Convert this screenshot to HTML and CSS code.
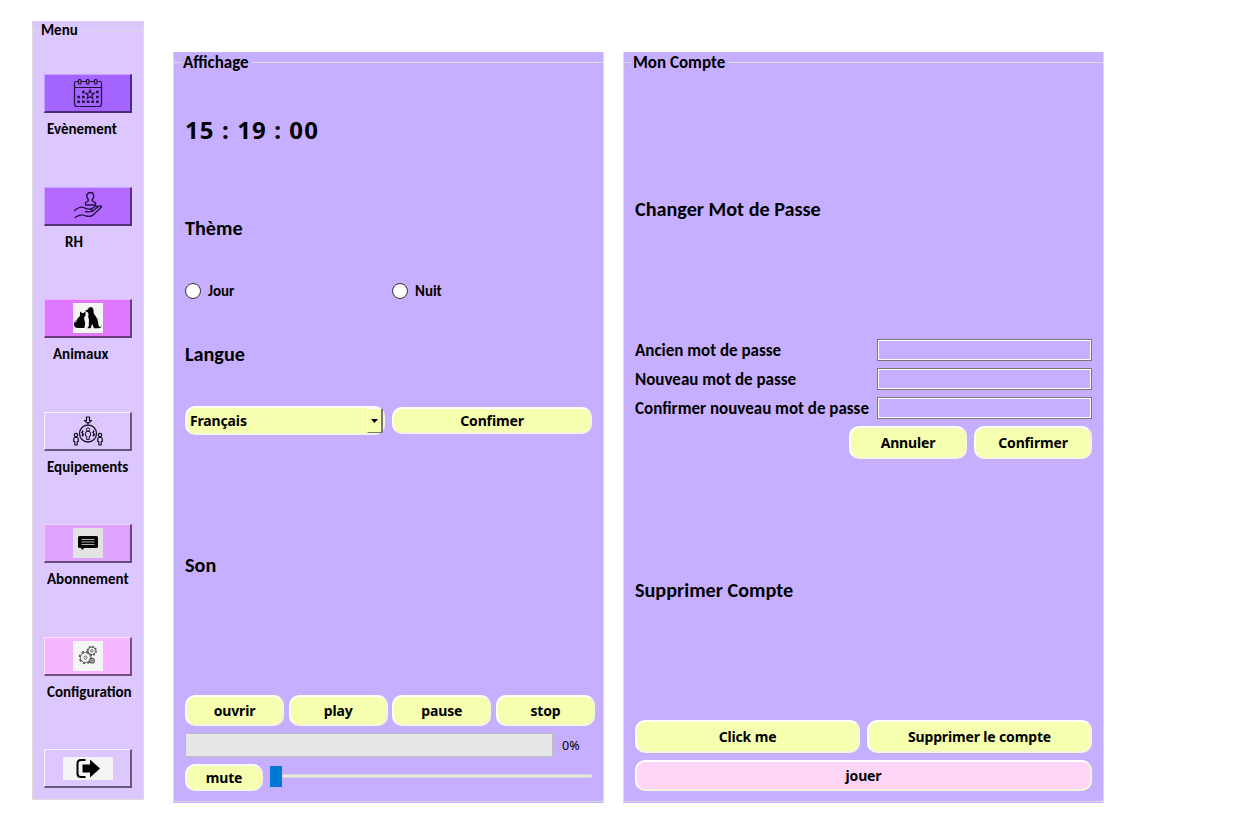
FILE: index.html
```
<!DOCTYPE html>
<html lang="fr">
<head>
<meta charset="utf-8">
<title>Configuration</title>
<link rel="stylesheet" href="styles.css">
</head>
<body>
<main class="window">
  <nav class="group menu">
    <div class="group-title"><span>Menu</span></div>
    <div class="items">
      <div class="item">
        <button class="tool events"><svg width="30" height="30" viewBox="0 0 30 30" fill="none" stroke="#201038" stroke-width="1.200"><path d="M5 3.500H3Q1.500 3.500 1.500 5V26Q1.500 28.500 4 28.500H26Q28.500 28.500 28.500 26V5Q28.500 3.500 27 3.500H25M8 3.500H13M17 3.500H22M2 9.500H28"/><rect x="5.500" y="1.500" width="2.500" height="4.500" rx="1"/><rect x="13.500" y="1.500" width="2.500" height="4.500" rx="1"/><rect x="21.500" y="1.500" width="2.500" height="4.500" rx="1"/><path d="m17 12 1.200 3 3 .2-2.300 2 .8 3.200-2.700-1.700-2.700 1.700.8-3.200-2.300-2 3-.2z"/><path stroke-width="2.600" stroke-dasharray="2.600 2.100" d="M9 14h2.600M23.100 14h2.600M4.300 19h7.300M23.100 19h2.600M4.300 23.700h22"/></svg></button>
        <span class="caption">Evènement</span>
      </div>
      <div class="item">
        <button class="tool staff"><svg width="30" height="30" viewBox="0 0 30 30" fill="none" stroke="#201038" stroke-width="1.300" stroke-linejoin="round" stroke-linecap="round"><path d="M12.500 14v-2.500q3-1 3-2.500Q13 6 14 3.500Q15 1.500 17.500 1.500T20.500 3.500Q21.500 6 19 9q0 1.500 3.500 2.500V14z"/><path d="M1.500 19.500Q7 15 10.500 16.500q3 2 7 1.500 2.500.5 1 2.200-2 1-6 .3M19 20.500l7-5.500q2.500-.7 2.500 1L20 24q-2 2-7 1l-3-1q-3-1-8 2.500M18 18l5-3q1.500 0 1 1.500"/></svg></button>
        <span class="caption shift-rh">RH</span>
      </div>
      <div class="item">
        <button class="tool animals"><svg class="plate" width="30" height="30" viewBox="0 0 30 30" fill="#050505"><path d="M7 13 7 8.500l2 1.500h1.500L12.500 8.500v4q-1.200 1.500-1.500 2.500Q13 20 11.500 25H5.500Q1 25 1 21.500q0-2.500 1.500-4.500-.5 2 .5 3Q3.500 15.500 7 13z"/><path d="M14.500 9q-2.300 0-2-1.500l2.300-1Q15.500 4 17.500 4q3 0 3 3.500-.3 2 1 4 3.500 4 3.700 8.500.3 3.500 1.300 3.700 1.200.3 2-1.200 0 2.500-3 2.800h-4.500l-2-4.500-1.200 4.500h-3.600l1.600-2 .2-6.500q-1.300-3-.5-6z"/></svg></button>
        <span class="caption shift-animals">Animaux</span>
      </div>
      <div class="item">
        <button class="tool gear"><svg width="30" height="30" viewBox="0 0 30 30" fill="none" stroke="#17131f" stroke-linejoin="round"><path stroke="#cfb9ee" stroke-width=".7" d="M0 10 10 0M0 17 7 10M20 9 29 0M23 14 30 7M2 29l7-7M20 29l7-7"/><circle cx="15" cy="17.500" r="8.500" stroke-width="1.300"/><path stroke-width="1.200" d="M13.500 1h3v3.500h2L15 7.500 11.500 4.500h2z"/><circle cx="15" cy="13.500" r="1.700"/><path d="M13.700 23.500v-3.500h-1.200v-3q0-1.500 1.500-1.500h2q1.500 0 1.500 1.500v3h-1.200v3.500z"/><g stroke-width="1.200"><circle cx="3" cy="19" r="1.700"/><path d="M1.800 29v-3.500H.7V23q0-1.500 1.500-1.500h1.600q1.500 0 1.500 1.500v2.500H4.200V29z"/><circle cx="27" cy="19" r="1.700"/><path d="M25.800 29v-3.500h-1.100V23q0-1.500 1.500-1.500h1.600q1.500 0 1.500 1.500v2.500h-1.100V29z"/></g><path d="M10.500 15.500q-2-.5-2 .7t1.200 1.200 1 1.500-2.200.7M9.500 14.300v6M21.500 15.500q-2-.5-2 .7t1.200 1.200 1 1.500-2.200.7M20.500 14.300v6"/></svg></button>
        <span class="caption">Equipements</span>
      </div>
      <div class="item">
        <button class="tool subs"><svg class="plate dim" width="30" height="30" viewBox="0 0 30 30"><path fill="#030303" d="M6.500 8h17Q25 8 25 9.500v9q0 1.500-1.500 1.500H11l-1.500 2L8 20H6.500Q5 20 5 18.500V9.500Q5 8 6.500 8z"/><path stroke="#aaa" stroke-width="1.100" d="M8.500 11.500h13M8.500 14h13M8.500 16.500h13"/></svg></button>
        <span class="caption">Abonnement</span>
      </div>
      <div class="item">
        <button class="tool config"><svg class="plate" width="30" height="30" viewBox="0 0 30 30" fill="none" stroke="#555" stroke-width=".9"><circle cx="12.500" cy="16.500" r="5"/><circle cx="12.500" cy="16.500" r="6" stroke-width="1.500" stroke-dasharray="2.500 2.200"/><circle cx="12.500" cy="16.500" r="1.500"/><circle cx="18.800" cy="9.800" r="3.700" fill="#f5f5f5"/><circle cx="18.800" cy="9.800" r="4.500" stroke-width="1.300" stroke-dasharray="1.800 1.700"/><circle cx="18.800" cy="9.800" r="1.200"/><circle cx="19" cy="19.700" r="2.300" stroke-width="1.200" fill="#f5f5f5"/><circle cx="19" cy="19.700" r=".8"/></svg></button>
        <span class="caption">Configuration</span>
      </div>
      <div class="item">
        <button class="tool exit"><svg class="plate" width="50" height="23" viewBox="0 0 50 23"><path d="M22.500 3H18q-3.500 0-3.500 3.500v10Q14.500 20 18 20h4.500" fill="none" stroke="#000" stroke-width="2"/><path d="M19.500 7.500H27V2.500l10 9-10 9v-5h-7.500z"/></svg></button>
      </div>
    </div>
  </nav>

  <section class="group panel display">
    <div class="group-title"><span>Affichage</span></div>
    <div class="body">
      <div class="clock">15 : 19 : 00</div>
      <h2 class="h-theme">Thème</h2>
      <div class="radios">
        <label><i class="radio"></i><span>Jour</span></label>
        <label><i class="radio"></i><span>Nuit</span></label>
      </div>
      <h2 class="h-lang">Langue</h2>
      <div class="lang-row">
        <div class="btn combo"><span>Français</span><span class="drop"><svg width="7" height="4" viewBox="0 0 7 4"><path d="M0 0h7L3.500 4z"/></svg></span></div>
        <button class="btn">Confimer</button>
      </div>
      <h2 class="h-sound">Son</h2>
      <div class="player">
        <button class="btn">ouvrir</button><button class="btn">play</button><button class="btn">pause</button><button class="btn">stop</button>
      </div>
      <div class="progress"><div class="bar"></div><span>0%</span></div>
      <div class="volume">
        <button class="btn">mute</button>
        <div class="slider"><div class="handle"></div><div class="groove"></div></div>
      </div>
    </div>
  </section>

  <section class="group panel account">
    <div class="group-title"><span>Mon Compte</span></div>
    <div class="body">
      <h2 class="h-pass">Changer Mot de Passe</h2>
      <div class="form">
        <span>Ancien mot de passe</span><div class="field"></div>
        <span>Nouveau mot de passe</span><div class="field"></div>
        <span>Confirmer nouveau mot de passe</span><div class="field"></div>
      </div>
      <div class="form-actions"><button class="btn">Annuler</button><button class="btn">Confirmer</button></div>
      <h2 class="h-delete">Supprimer Compte</h2>
      <div class="delete-actions"><button class="btn">Click me</button><button class="btn">Supprimer le compte</button></div>
      <button class="btn pink">jouer</button>
    </div>
  </section>
</main>
</body>
</html>
```
FILE: styles.css
```
* { box-sizing: border-box; }
body { margin: 0; background: #fff; color: #000; font: bold 16px/20px Carlito, Lato, sans-serif; }
button { margin: 0; padding: 0; color: inherit; font: inherit; }
svg { display: block; }
h2 { margin: 0; font-size: 20.2px; line-height: 24px; white-space: nowrap; }

.window { display: flex; align-items: flex-start; width: 1242px; height: 828px; padding-left: 32px; overflow: hidden; }
.group { display: flex; flex-direction: column; border: 1px solid #dcdcdc; border-top: 0; }
.group-title { display: flex; align-items: center; height: 20px; margin: 0 -1px; font-size: 17px; white-space: nowrap; }
.group-title::before { content: ""; width: 8px; height: 1px; background: #dcdcdc; }
.group-title::after { content: ""; flex: 1; height: 1px; background: #dcdcdc; }
.group-title span { padding: 2px 3px 0 2px; }

.menu { width: 112px; height: 779px; margin-top: 21px; background: #dcc8ff; }
.menu .group-title { height: 19px; font-size: 15px; }
.menu .group-title span { padding: 0 3px 1px 1px; }
.items { padding: 34px 0 0 11px; }
.item { display: flex; flex-direction: column; align-items: flex-start; height: 112.5px; }
.item:last-child { height: 39px; }
.tool { display: flex; align-items: center; justify-content: center; flex: none; width: 88px; height: 39px; border-style: solid; border-width: 1px 2px 2px 1px; }
.caption { margin: 6px 0 0 3px; font-size: 15px; white-space: nowrap; }
.shift-rh { margin-left: 21px; }
.shift-animals { margin-left: 9px; }
.plate { background: #f5f5f5; }
.plate.dim { background: #e3e3e3; }
.events { background: #a364ff; border-color: #c79fff #4b2b7b #4b2b7b #c79fff; }
.staff { background: #b469ff; border-color: #d1a5ff #57307c #57307c #d1a5ff; }
.animals { background: #df78ff; border-color: #edb5ff #6c3b7d #6c3b7d #edb5ff; }
.gear, .exit { background: #dcc8ff; border-color: #f7f2ff #655879 #655879 #f7f2ff; }
.subs { background: #dea2ff; border-color: #edccff #68477a #68477a #edccff; }
.config { background: #f3b6ff; border-color: #fadfff #725279 #725279 #fadfff; }

.panel { height: 751px; margin-top: 52px; background: #c6afff; box-shadow: inset 0 -1px #dcdcdc; border-bottom-color: #c6afff; }
.display { width: 431px; margin-left: 29px; }
.account { width: 481px; margin-left: 19px; }
.body { padding: 0 11px; }

.btn { display: flex; align-items: center; justify-content: center; border: 2px solid; border-color: #fff #f5f5dc #f5f5dc #fff; border-radius: 10px; background: #f5ffaf; font: bold 14px/18px "Noto Sans", sans-serif; letter-spacing: -0.15px; white-space: nowrap; }

.clock { height: 32px; margin-top: 42px; font: bold 24px/32px "Noto Sans", sans-serif; letter-spacing: 1.1px; white-space: nowrap; }
.h-theme { margin-top: 70px; }
.radios { display: grid; grid-template-columns: 207px 1fr; margin-top: 41px; font-size: 15px; }
.radios label { display: flex; align-items: center; gap: 7px; height: 20px; }
.radio { width: 16px; height: 16px; border: 1px solid #333; border-radius: 50%; background: #fff; }
.h-lang { margin-top: 41px; }
.lang-row { display: grid; grid-template-columns: 200px 200px; gap: 7px; align-items: center; height: 29px; margin-top: 40px; }
.lang-row .btn { height: 27px; }
.lang-row .combo { justify-content: space-between; height: 29px; padding-left: 3px; }
.drop { display: flex; align-items: center; justify-content: center; width: 16px; height: 25px; border-style: solid; border-width: 1px 2px 1px 1px; border-color: #fff #777 #777 #fff; }
.h-sound { margin-top: 118px; }
.player { display: grid; grid-template-columns: repeat(4, 99px); gap: 4.67px; margin-top: 118px; width: 410px; }
.player .btn { height: 31px; }
.progress { display: flex; align-items: center; gap: 9px; height: 24px; margin-top: 7px; font: 12.5px/20px "Noto Sans", sans-serif; }
.progress span { padding-top: 1px; }
.bar { width: 368px; height: 24px; border: 1px solid #bcbcbc; background: #e6e6e6; }
.volume { display: flex; align-items: center; gap: 7px; margin-top: 7px; height: 27px; }
.volume .btn { width: 78px; height: 27px; }
.slider { display: flex; align-items: center; flex: 1; margin-top: -3px; }
.handle { width: 12px; height: 21px; background: #0078d7; }
.groove { flex: 1; height: 4px; border: 1px solid #d6d6d6; background: #e7eaea; }

.h-pass { margin-top: 125px; }
.form { display: grid; grid-template-columns: 242px 215px; row-gap: 7px; margin-top: 118px; font-size: 17px; white-space: nowrap; line-height: 24px; grid-auto-rows: 22px; }
.field { height: 22px; border: 1px solid #777; box-shadow: inset 0 0 0 1px #fff; }
.form-actions { display: flex; justify-content: flex-end; gap: 7px; margin-top: 7px; }
.form-actions .btn { width: 118px; height: 33px; }
.h-delete { margin-top: 119px; }
.delete-actions { display: grid; grid-template-columns: 225px 225px; gap: 7px; margin-top: 118px; }
.delete-actions .btn { height: 33px; }
.pink { width: 457px; height: 31px; margin-top: 7px; background: #ffd5f7; }
```
